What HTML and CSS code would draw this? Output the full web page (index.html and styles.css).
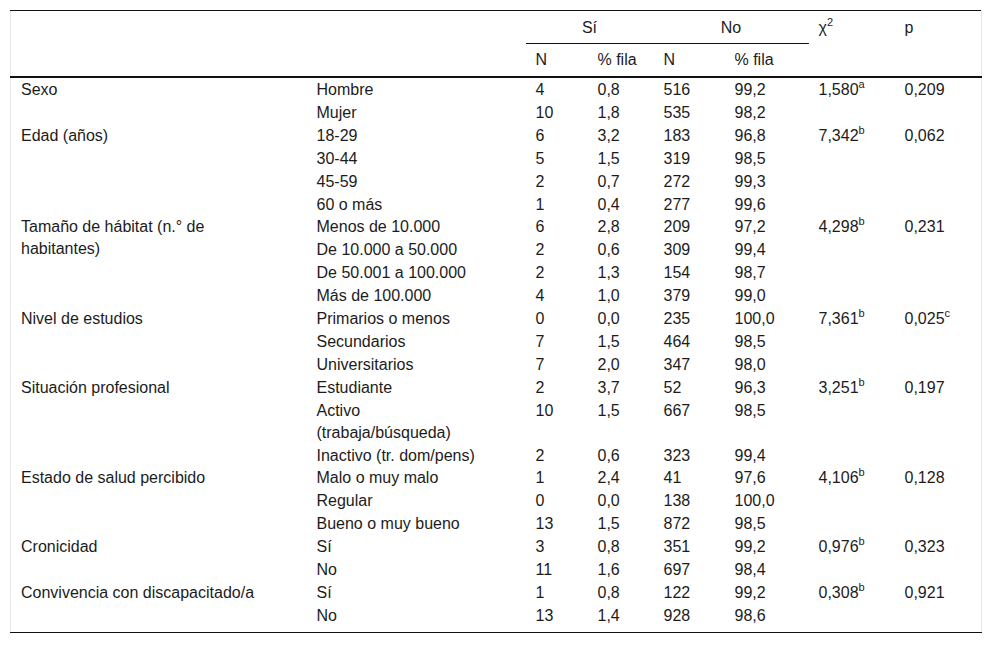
FILE: index.html
```html
<!DOCTYPE html>
<html lang="es">
<head>
<meta charset="utf-8">
<title>Tabla</title>
<link rel="stylesheet" href="styles.css">
</head>
<body>
<div class="wrap">
<table class="data">
<colgroup>
<col class="c1"><col class="c2"><col class="c3"><col class="c4"><col class="c5"><col class="c6"><col class="c7"><col class="c8">
</colgroup>
<thead>
<tr class="h1">
<th rowspan="2"></th>
<th rowspan="2"></th>
<th colspan="2" class="grp">Sí</th>
<th colspan="2" class="grp">No</th>
<th rowspan="2" class="top">χ<sup>2</sup></th>
<th rowspan="2" class="top">p</th>
</tr>
<tr class="h2">
<th>N</th><th>% fila</th><th>N</th><th>% fila</th>
</tr>
</thead>
<tbody>
<tr><td class="var">Sexo</td><td class="cat">Hombre</td><td>4</td><td>0,8</td><td>516</td><td>99,2</td><td>1,580<sup>a</sup></td><td>0,209</td></tr>
<tr><td class="var"></td><td class="cat">Mujer</td><td>10</td><td>1,8</td><td>535</td><td>98,2</td><td></td><td></td></tr>
<tr><td class="var">Edad (años)</td><td class="cat">18-29</td><td>6</td><td>3,2</td><td>183</td><td>96,8</td><td>7,342<sup>b</sup></td><td>0,062</td></tr>
<tr><td class="var"></td><td class="cat">30-44</td><td>5</td><td>1,5</td><td>319</td><td>98,5</td><td></td><td></td></tr>
<tr><td class="var"></td><td class="cat">45-59</td><td>2</td><td>0,7</td><td>272</td><td>99,3</td><td></td><td></td></tr>
<tr><td class="var"></td><td class="cat">60 o más</td><td>1</td><td>0,4</td><td>277</td><td>99,6</td><td></td><td></td></tr>
<tr><td class="var" rowspan="2">Tamaño de hábitat (n.° de habitantes)</td><td class="cat">Menos de 10.000</td><td>6</td><td>2,8</td><td>209</td><td>97,2</td><td>4,298<sup>b</sup></td><td>0,231</td></tr>
<tr><td class="cat">De 10.000 a 50.000</td><td>2</td><td>0,6</td><td>309</td><td>99,4</td><td></td><td></td></tr>
<tr><td class="var"></td><td class="cat">De 50.001 a 100.000</td><td>2</td><td>1,3</td><td>154</td><td>98,7</td><td></td><td></td></tr>
<tr><td class="var"></td><td class="cat">Más de 100.000</td><td>4</td><td>1,0</td><td>379</td><td>99,0</td><td></td><td></td></tr>
<tr><td class="var">Nivel de estudios</td><td class="cat">Primarios o menos</td><td>0</td><td>0,0</td><td>235</td><td>100,0</td><td>7,361<sup>b</sup></td><td>0,025<sup>c</sup></td></tr>
<tr><td class="var"></td><td class="cat">Secundarios</td><td>7</td><td>1,5</td><td>464</td><td>98,5</td><td></td><td></td></tr>
<tr><td class="var"></td><td class="cat">Universitarios</td><td>7</td><td>2,0</td><td>347</td><td>98,0</td><td></td><td></td></tr>
<tr><td class="var">Situación profesional</td><td class="cat">Estudiante</td><td>2</td><td>3,7</td><td>52</td><td>96,3</td><td>3,251<sup>b</sup></td><td>0,197</td></tr>
<tr><td class="var"></td><td class="cat">Activo (trabaja/búsqueda)</td><td>10</td><td>1,5</td><td>667</td><td>98,5</td><td></td><td></td></tr>
<tr><td class="var"></td><td class="cat">Inactivo (tr. dom/pens)</td><td>2</td><td>0,6</td><td>323</td><td>99,4</td><td></td><td></td></tr>
<tr><td class="var">Estado de salud percibido</td><td class="cat">Malo o muy malo</td><td>1</td><td>2,4</td><td>41</td><td>97,6</td><td>4,106<sup>b</sup></td><td>0,128</td></tr>
<tr><td class="var"></td><td class="cat">Regular</td><td>0</td><td>0,0</td><td>138</td><td>100,0</td><td></td><td></td></tr>
<tr><td class="var"></td><td class="cat">Bueno o muy bueno</td><td>13</td><td>1,5</td><td>872</td><td>98,5</td><td></td><td></td></tr>
<tr><td class="var">Cronicidad</td><td class="cat">Sí</td><td>3</td><td>0,8</td><td>351</td><td>99,2</td><td>0,976<sup>b</sup></td><td>0,323</td></tr>
<tr><td class="var"></td><td class="cat">No</td><td>11</td><td>1,6</td><td>697</td><td>98,4</td><td></td><td></td></tr>
<tr><td class="var">Convivencia con discapacitado/a</td><td class="cat">Sí</td><td>1</td><td>0,8</td><td>122</td><td>99,2</td><td>0,308<sup>b</sup></td><td>0,921</td></tr>
<tr class="last"><td class="var"></td><td class="cat">No</td><td>13</td><td>1,4</td><td>928</td><td>98,6</td><td></td><td></td></tr>
</tbody>
</table>
</div>
</body>
</html>
```
FILE: styles.css
```css
html, body {
  margin: 0;
  padding: 0;
  background: #fff;
}
.wrap {
  padding: 10px 11px 0 10px;
}
.data {
  width: 971px;
  table-layout: fixed;
  border-collapse: collapse;
  font-family: "Liberation Sans", Arial, sans-serif;
  font-size: 16px;
  color: #1c1c1c;
  border-top: 1px solid #111;
  border-bottom: 1px solid #111;
  border-left: 1px solid #e6e6e6;
  border-right: 1px solid #e6e6e6;
}
.c1 { width: 296px; }
.c2 { width: 219px; }
.c3 { width: 62px; }
.c4 { width: 66px; }
.c5 { width: 71px; }
.c6 { width: 84px; }
.c7 { width: 86px; }
.c8 { width: 87px; }
.data th {
  font-weight: normal;
  text-align: left;
  vertical-align: top;
  line-height: 22px;
  padding: 5px 10px 5px 10px;
}
.data .h1 th {
  padding-top: 6px;
  padding-bottom: 4px;
}
.data th.grp {
  text-align: center;
  border-bottom: 1px solid #111;
}
.data .h2 th {
  border-bottom: 2px solid #111;
}
.data th.top {
  border-bottom: 2px solid #111;
}
.data .h1 th:nth-child(1),
.data .h1 th:nth-child(2) {
  border-bottom: 2px solid #111;
}
.data td {
  vertical-align: top;
  line-height: 21.9px;
  padding: 1px 10px 0 10px;
  white-space: normal;
}
.data td.var {
  padding-right: 36px;
}
.data td.cat {
  padding-right: 39px;
}
.data .last td {
  padding-bottom: 5px;
}
.data sup {
  font-size: 11px;
  line-height: 0;
  vertical-align: 7px;
}
```
